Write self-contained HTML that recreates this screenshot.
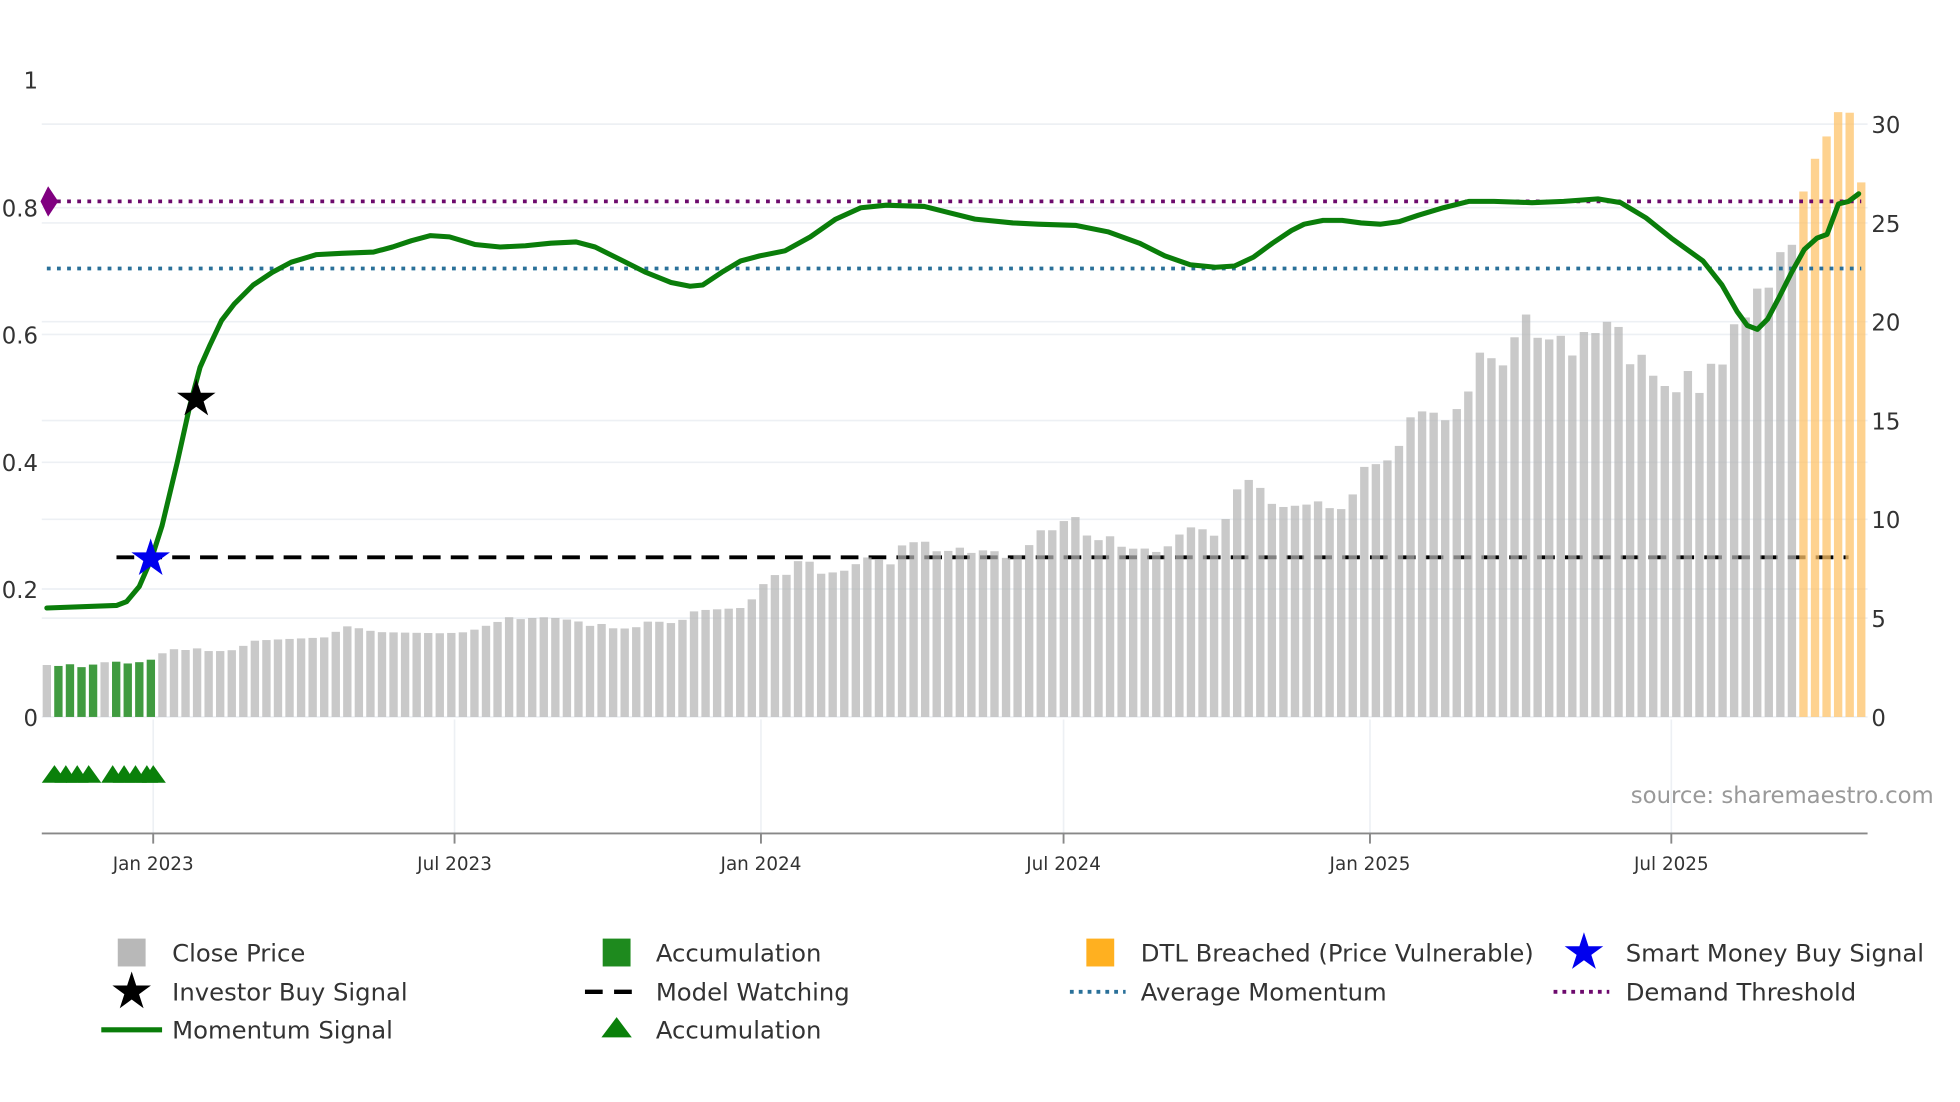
<!DOCTYPE html>
<html><head><meta charset="utf-8"><style>
html,body{margin:0;padding:0;background:#fff;}
svg{display:block;}
text{font-family:"DejaVu Sans","Liberation Sans",sans-serif;}
</style></head><body>
<svg id="s" width="1960" height="1102" viewBox="0 0 1548 870" preserveAspectRatio="none" xmlns="http://www.w3.org/2000/svg">
<defs>
<polygon id="star" points="0,-1 0.2245,-0.309 0.951,-0.309 0.363,0.118 0.588,0.809 0,0.382 -0.588,0.809 -0.363,0.118 -0.951,-0.309 -0.2245,-0.309"/>
</defs>
<rect width="1548" height="870" fill="#fff"/>
<g stroke="#edf0f4" stroke-width="1.3">
<line x1="33" x2="1475" y1="98" y2="98"/><line x1="33" x2="1475" y1="164" y2="164"/><line x1="33" x2="1475" y1="176" y2="176"/>
<line x1="33" x2="1475" y1="254" y2="254"/><line x1="33" x2="1475" y1="264" y2="264"/><line x1="33" x2="1475" y1="332" y2="332"/>
<line x1="33" x2="1475" y1="365" y2="365"/><line x1="33" x2="1475" y1="410" y2="410"/><line x1="33" x2="1475" y1="465" y2="465"/>
<line x1="33" x2="1475" y1="488" y2="488"/><line x1="33" x2="1475" y1="566" y2="566"/>
<line x1="121" x2="121" y1="568" y2="658"/><line x1="359" x2="359" y1="568" y2="658"/><line x1="601" x2="601" y1="568" y2="658"/>
<line x1="840" x2="840" y1="568" y2="658"/><line x1="1082" x2="1082" y1="568" y2="658"/><line x1="1320" x2="1320" y1="568" y2="658"/>
</g>
<line x1="92" x2="1460" y1="440" y2="440" stroke="#000" stroke-width="3" stroke-dasharray="14,8"/>
<g id="bars"></g>
<line x1="37" x2="1470" y1="159" y2="159" stroke="#6d0a6d" stroke-width="3" stroke-dasharray="3,5"/>
<line x1="37" x2="1470" y1="212" y2="212" stroke="#2a7099" stroke-width="3" stroke-dasharray="3,5"/>
<polygon points="38,147 46,159 38,171 32,159" fill="#800080"/>
<polyline id="mom" fill="none" stroke="#0a7d0a" stroke-width="4" stroke-linejoin="round" stroke-linecap="round" points=""/>
<use href="#star" transform="translate(119,441) scale(16)" fill="#0000ee"/>
<use href="#star" transform="translate(155,315) scale(16)" fill="#000"/>
<g fill="#0a800a">
<polygon points="33,618 43,604 53,618"/><polygon points="43,618 52,604 61,618"/><polygon points="52,618 61,604 70,618"/><polygon points="61,618 70,604 80,618"/>
<polygon points="80,618 89,604 98,618"/><polygon points="89,618 98,604 107,618"/><polygon points="98,618 107,604 116,618"/><polygon points="107,618 116,604 125,618"/><polygon points="112,618 121,604 131,618"/>
</g>
<line x1="33" x2="1475" y1="658" y2="658" stroke="#888" stroke-width="1.5"/>
<g stroke="#888" stroke-width="1.5">
<line x1="121" x2="121" y1="658" y2="666"/><line x1="359" x2="359" y1="658" y2="666"/><line x1="601" x2="601" y1="658" y2="666"/>
<line x1="840" x2="840" y1="658" y2="666"/><line x1="1082" x2="1082" y1="658" y2="666"/><line x1="1320" x2="1320" y1="658" y2="666"/>
</g>
<g font-size="14.5" fill="#333" text-anchor="middle">
<text x="121" y="687">Jan 2023</text><text x="359" y="687">Jul 2023</text><text x="601" y="687">Jan 2024</text>
<text x="840" y="687">Jul 2024</text><text x="1082" y="687">Jan 2025</text><text x="1320" y="687">Jul 2025</text>
</g>
<g font-size="18" fill="#333" text-anchor="end">
<text x="30" y="70">1</text><text x="30" y="171">0.8</text><text x="30" y="271">0.6</text>
<text x="30" y="372">0.4</text><text x="30" y="472">0.2</text><text x="30" y="573">0</text>
</g>
<g font-size="18" fill="#333">
<text x="1478" y="105">30</text><text x="1478" y="183">25</text><text x="1478" y="261">20</text>
<text x="1478" y="339">15</text><text x="1478" y="417">10</text><text x="1478" y="495">5</text><text x="1478" y="573">0</text>
</g>
<text x="1288" y="634" font-size="18" fill="#999">source: sharemaestro.com</text>
<g font-size="19.2" fill="#333">
<rect x="93" y="741" width="22" height="22" fill="#b8b8b8"/><text x="136" y="759">Close Price</text>
<rect x="476" y="741" width="22" height="22" fill="#1e8a1e"/><text x="518" y="759">Accumulation</text>
<rect x="858" y="741" width="22" height="22" fill="#ffb020"/><text x="901" y="759">DTL Breached (Price Vulnerable)</text>
<use href="#star" transform="translate(1251,752) scale(16)" fill="#0000ee"/><text x="1284" y="759">Smart Money Buy Signal</text>
<use href="#star" transform="translate(104,783) scale(16)" fill="#000"/><text x="136" y="790">Investor Buy Signal</text>
<line x1="462" x2="506" y1="783" y2="783" stroke="#000" stroke-width="3.5" stroke-dasharray="14,9"/><text x="518" y="790">Model Watching</text>
<line x1="845" x2="889" y1="783" y2="783" stroke="#2a7099" stroke-width="3" stroke-dasharray="3,4"/><text x="901" y="790">Average Momentum</text>
<line x1="1227" x2="1271" y1="783" y2="783" stroke="#6d0a6d" stroke-width="3" stroke-dasharray="3,4"/><text x="1284" y="790">Demand Threshold</text>
<line x1="80" x2="128" y1="813" y2="813" stroke="#0a7d0a" stroke-width="4"/><text x="136" y="820">Momentum Signal</text>
<polygon points="475,819 487,803 499,819" fill="#0a800a"/><text x="518" y="820">Accumulation</text>
</g>
</svg>
<script>
(function(){
var NS='http://www.w3.org/2000/svg';
var kf=[[37,525],[45,526],[54,524],[63,527],[72,525],[81,523],[90,522],[99,524],[108,523],[117,522],[126,517],[135,512],[144,514],[153,511],[162,514],[180,514],[189,512],[198,506],[216,505],[261,503],[270,494],[279,495],[297,499],[351,500],[369,499],[387,493],[396,490],[405,486],[414,490],[423,487],[441,488],[459,491],[468,495],[477,492],[486,497],[504,495],[513,490],[531,492],[540,489],[549,482],[585,480],[594,473],[603,461],[612,454],[621,454],[630,443],[639,443],[648,453],[666,451],[675,446],[684,440],[693,441],[702,448],[711,431],[729,426],[738,435],[747,436],[756,431],[765,437],[783,433],[792,441],[801,439],[810,436],[819,418],[828,420],[837,416],[846,403],[855,417],[864,432],[873,418],[882,431],[900,434],[909,432],[918,440],[927,422],[936,422],[945,411],[954,424],[963,422],[972,400],[981,376],[990,381],[999,388],[1008,404],[1017,398],[1026,400],[1044,395],[1053,404],[1062,401],[1071,386],[1080,362],[1089,368],[1098,362],[1107,349],[1116,324],[1134,326],[1143,333],[1152,321],[1161,307],[1170,274],[1179,284],[1188,289],[1197,264],[1206,247],[1215,268],[1224,268],[1233,265],[1242,281],[1251,262],[1260,263],[1269,254],[1278,257],[1287,288],[1296,279],[1305,296],[1314,304],[1323,312],[1332,290],[1341,314],[1350,286],[1359,294],[1368,256],[1377,256],[1386,228],[1398,227],[1407,196],[1416,193],[1425,148],[1434,124],[1443,107],[1452,88],[1461,89],[1470,144]];
function topAt(x){for(var i=0;i<kf.length-1;i++){if(x>=kf[i][0]&&x<=kf[i+1][0]){var t=(x-kf[i][0])/(kf[i+1][0]-kf[i][0]);return kf[i][1]+t*(kf[i+1][1]-kf[i][1]);}}return x<kf[0][0]?kf[0][1]:kf[kf.length-1][1];}
var g=document.getElementById('bars');
var greens=[1,2,3,4,6,7,8,9];
var n=157,step=(1470-37)/n;
for(var i=0;i<=n;i++){var x=37+i*step;var t=topAt(x),c='#b4b4b4',op='0.72';
if(greens.indexOf(i)>=0){c='#1e8a1e';op='0.85';}if(x>=1420){c='#fdc36a';op='0.75';}
var r=document.createElementNS(NS,'rect');
r.setAttribute('x',x-3.3);r.setAttribute('y',t);r.setAttribute('width',6.6);r.setAttribute('height',566-t);
r.setAttribute('fill',c);r.setAttribute('fill-opacity',op);g.appendChild(r);}
var pts=[[37,480],[92,478],[100,475],[110,463],[120,440],[128,415],[140,365],[150,320],[158,290],[166,272],[175,253],[185,240],[200,225],[215,215],[230,207],[250,201],[270,200],[295,199],[310,195],[325,190],[340,186],[355,187],[375,193],[395,195],[415,194],[435,192],[455,191],[470,195],[490,205],[510,215],[530,223],[545,226],[555,225],[570,215],[585,206],[600,202],[620,198],[640,187],[660,173],[680,164],[700,162],[730,163],[750,168],[770,173],[800,176],[820,177],[850,178],[875,183],[900,192],[920,202],[940,209],[960,211],[975,210],[990,203],[1005,192],[1020,182],[1030,177],[1045,174],[1060,174],[1075,176],[1090,177],[1105,175],[1120,170],[1140,164],[1160,159],[1180,159],[1210,160],[1235,159],[1262,157],[1280,160],[1300,172],[1320,188],[1345,206],[1360,225],[1372,246],[1380,257],[1388,260],[1396,252],[1405,235],[1415,215],[1425,197],[1435,188],[1443,185],[1452,161],[1460,159],[1468,153]];
document.getElementById('mom').setAttribute('points',pts.map(function(p){return p.join(',');}).join(' '));
})();
</script>
</body></html>
